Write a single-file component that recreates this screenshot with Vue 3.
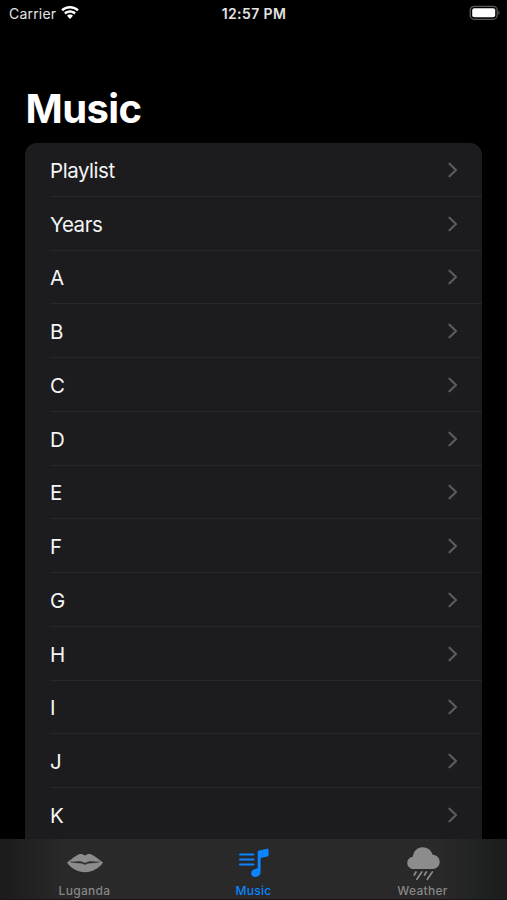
<script setup>
const rows = ['Playlist', 'Years', 'A', 'B', 'C', 'D', 'E', 'F', 'G', 'H', 'I', 'J', 'K']
</script>

<template>
  <div class="screen">
    <header class="status">
      <div class="carrier">
        <span>Carrier</span>
        <svg class="wifi" viewBox="0 0 18 14" width="18" height="14" fill="#fff">
          <path d="M9 0C5.500 0 2.400 1.300 0.200 3.500L2 5.300C3.800 3.500 6.200 2.500 9 2.500S14.200 3.500 16 5.300L17.800 3.500C15.600 1.300 12.500 0 9 0Z" />
          <path d="M9 4.300C6.700 4.300 4.600 5.200 3.100 6.600L4.800 8.400C5.900 7.400 7.300 6.700 9 6.700S12.100 7.400 13.200 8.400L14.900 6.600C13.400 5.200 11.300 4.300 9 4.300Z" />
          <path d="M9 8.400C7.700 8.400 6.700 8.900 6 9.700L9 13L12 9.700C11.300 8.900 10.300 8.400 9 8.400Z" />
        </svg>
      </div>
      <span class="time">12:57 PM</span>
      <svg class="battery" viewBox="0 0 32 16" width="32" height="16">
        <rect x="1.200" y="1.300" width="27" height="13" rx="4" fill="none" stroke="#59595b" stroke-width="1.300" />
        <rect x="3.200" y="3.300" width="23" height="9" rx="2" fill="#fff" />
        <path d="M29.500 5.500C31 6 31 9.600 29.500 10.100Z" fill="#59595b" />
      </svg>
    </header>

    <h1>Music</h1>

    <main class="list">
      <div v-for="row in rows" :key="row" class="row">
        <span class="label">{{ row }}</span>
        <svg viewBox="0 0 10 16" width="10" height="16">
          <path d="M1.500 1.700L8 8L1.500 14.300" fill="none" stroke="#5b5b5e" stroke-width="2.200" stroke-linecap="round" stroke-linejoin="round" />
        </svg>
      </div>
    </main>

    <nav class="tabs">
      <div class="tab">
        <svg viewBox="0 0 38 34" width="38" height="34">
          <path d="M1 14.500C5 11.500 9 8 12.500 6.400C15.200 5.300 17 6.200 19 7.500C21 6.200 22.800 5.300 25.500 6.400C29 8 33 11.500 37 14.500C33 20.500 26 24.200 19 24.200S5 20.500 1 14.500Z" fill="#8c8c8c" />
          <path d="M4.500 13.800C9 14.300 12.500 12.800 16 14L19 15.200L22 14C25.500 12.800 29 14.300 33.500 13.800C29 15 25.500 15 22 15.300L19 16.600L16 15.300C12.500 15 9 15 4.500 13.800Z" fill="#292929" stroke="#292929" stroke-width=".4" />
        </svg>
        <span>Luganda</span>
      </div>
      <div class="tab active">
        <svg viewBox="0 0 38 34" width="38" height="34" fill="#0a84ff">
          <path d="M5 6.500h13.500M5 11.500h13.500M5 16.500h13.500" fill="none" stroke="#0a84ff" stroke-width="2" stroke-linecap="round" />
          <path d="M22.700 4.300Q22.700 2.900 24 2.600L32.300 .7Q33.600 .4 33.600 1.700V7Q33.600 8.200 32.400 8.500L25.600 10V23.200C25.600 26.800 23.500 28.900 20.300 28.900C17.900 28.900 16.200 27.400 16.200 25.200C16.200 22.900 17.900 21.500 20.300 21L21.800 20.600Q22.700 20.300 22.700 19.400Z" />
        </svg>
        <span>Music</span>
      </div>
      <div class="tab">
        <svg viewBox="0 0 38 34" width="38" height="34">
          <path d="M10 21C6 21 3.300 18.400 3.300 14.900C3.300 11.700 5.500 9.300 8.700 8.700C9.500 3.300 13.300 -.8 18.700 -.8C23.500 -.8 27.200 2.100 28.700 6.700C32.900 6.900 35.700 9.900 35.700 13.800C35.700 18 32.600 21 28.500 21Z" fill="#8c8c8c" />
          <path d="M12 24L10.200 27M17.800 24L12.800 31.300M22.300 24L20.500 27M28.300 24L23.300 31.300" fill="none" stroke="#8c8c8c" stroke-width="1.700" stroke-linecap="round" />
        </svg>
        <span>Weather</span>
      </div>
    </nav>
  </div>
</template>

<style>
body {
  background: #000;
}
</style>

<style scoped>
.screen {
  display: flex;
  flex-direction: column;
  width: 507px;
  height: 900px;
  overflow: hidden;
  background: #000;
  color: #f5f5f5;
  font-family: Inter, "Liberation Sans", sans-serif;
}
.status {
  display: grid;
  grid-template-columns: 1fr auto 1fr;
  align-items: center;
  flex: none;
  height: 27px;
  padding: 0 6px 0 9px;
  font-size: 14px;
  color: #e4e4e4;
}
.carrier {
  display: flex;
  align-items: center;
  gap: 5px;
  letter-spacing: 0.2px;
}
.wifi {
  margin-top: -1px;
}
.time {
  font-size: 14px;
  font-weight: 600;
  letter-spacing: 0.4px;
  margin-left: -2px;
}
.battery {
  justify-self: end;
  margin-top: -1px;
}
h1 {
  flex: none;
  margin: 58px 0 0 25.5px;
  height: 58px;
  font-size: 40px;
  line-height: 48px;
  font-weight: 700;
  letter-spacing: -0.6px;
  color: #fff;
}
.list {
  flex: 1;
  min-height: 0;
  overflow: hidden;
  margin: 0 25px 0 25px;
  padding-left: 25px;
  border-radius: 12px 12px 0 0;
  background: #1c1c1e;
}
.row {
  display: flex;
  align-items: center;
  justify-content: space-between;
  box-sizing: border-box;
  height: 53.75px;
  padding: 1px 24px 0 0;
  border-bottom: 1px solid #28282b;
  font-size: 20.5px;
}
.label {
  padding-top: 1px;
  letter-spacing: -0.45px;
}
.tabs {
  display: grid;
  grid-template-columns: repeat(3, 1fr);
  flex: none;
  box-sizing: border-box;
  height: 61px;
  border-bottom: 1px solid #1b121a;
  background: linear-gradient(90deg, #1b1b1b 0, #202020 25px, #292929 65px, #292929 440px, #202121 480px, #1b1c1c 100%);
}
.tab {
  display: flex;
  flex-direction: column;
  align-items: center;
  padding-top: 9px;
  font-size: 12px;
  font-weight: 500;
  letter-spacing: 0.3px;
  line-height: 18px;
  color: #868686;
}
.tab svg {
  overflow: visible;
}
.active {
  color: #0a84ff;
}
</style>
